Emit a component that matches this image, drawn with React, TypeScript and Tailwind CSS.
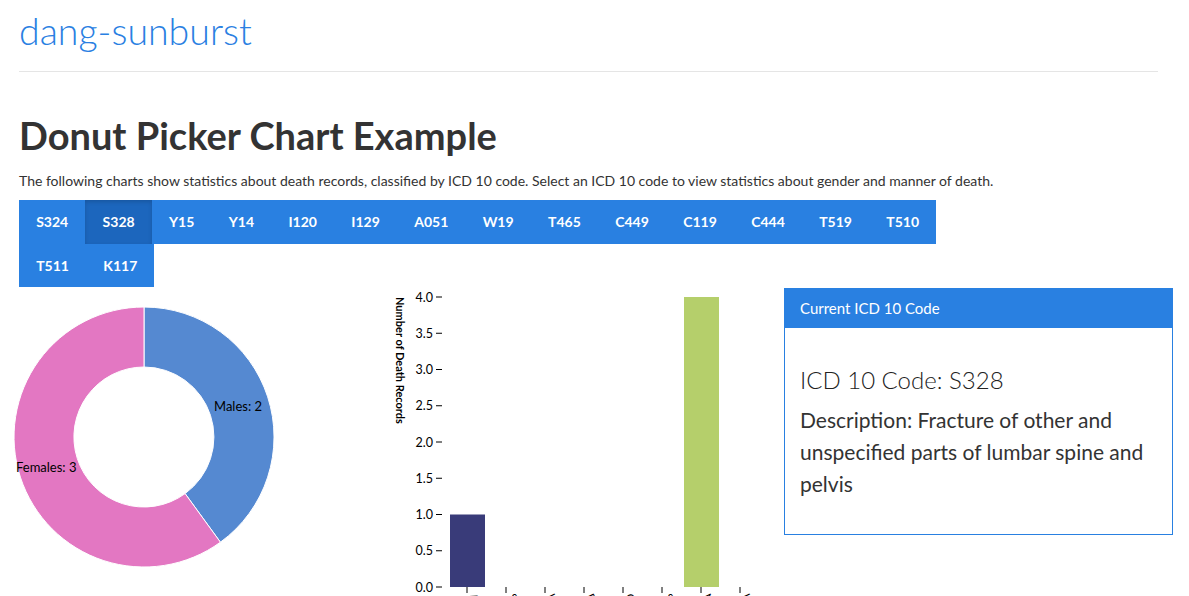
const codes = ["S324", "S328", "Y15", "Y14", "I120", "I129", "A051", "W19", "T465", "C449", "C119", "C444", "T519", "T510", "T511", "K117"];

const selected = "S328";

const yTicks = [0, 0.5, 1, 1.5, 2, 2.5, 3, 3.5, 4];
const xLabels = ["Accident", "Suicide", "Homicide", "Pending", "Could not be determined", "Self-inflicted", "Natural", "Unknown"];
const bars = [
  { i: 0, value: 1, color: "#393b79" },
  { i: 6, value: 4, color: "#b5cf6b" },
];

function Donut() {
  return (
    <svg width="360" height="310" className="overflow-visible block">
      <path
        d="M125,20 A130,130 0 0 1 201.4,255.2 L166.1,206.6 A70,70 0 0 0 125,80 Z"
        fill="#5589d1"
        stroke="#fff"
        strokeWidth="1"
      />
      <path
        d="M201.4,255.2 A130,130 0 1 1 125,20 L125,80 A70,70 0 1 0 166.1,206.6 Z"
        fill="#e377c2"
        stroke="#fff"
        strokeWidth="1"
      />
      <text x="195" y="124" fontSize="13" fill="#000">Males: 2</text>
      <text x="-3" y="185" fontSize="13" fill="#000">Females: 3</text>
    </svg>
  );
}

function BarChart() {
  const y = (v: number) => 300 - 72.5 * v;
  return (
    <svg width="404" height="330" className="overflow-visible block shrink-0">
      <text transform="translate(16,10) rotate(90)" fontSize="11" fontWeight="700" fill="#000">
        Number of Death Records
      </text>
      {yTicks.map((t) => (
        <g key={t}>
          <line x1="56" x2="62" y1={y(t)} y2={y(t)} stroke="#000" strokeWidth="1" />
          <text x="53" y={y(t) + 4.5} fontSize="12.5" textAnchor="end" fill="#000">
            {t.toFixed(1)}
          </text>
        </g>
      ))}
      {bars.map((b) => (
        <rect key={b.i} x={70 + 39 * b.i} y={y(b.value)} width="35" height={72.5 * b.value} fill={b.color} />
      ))}
      {xLabels.map((l, i) => (
        <g key={l}>
          <line x1={87 + 39 * i} x2={87 + 39 * i} y1="300" y2="306" stroke="#000" strokeWidth="1" />
          <text transform={`translate(${89 + 39 * i},309) rotate(65)`} fontSize="11" fill="#000">
            {l}
          </text>
        </g>
      ))}
    </svg>
  );
}

export default function App() {
  return (
    <div className="bg-white min-h-screen text-[#333] font-['Lato','Open_Sans',sans-serif]">
      <div className="px-[19px] w-[1177px]">
        <div className="pt-[9px] pb-[18px] border-b border-[#e5e5e5]">
          <h1 className="text-[37.5px] leading-[44px] font-light text-[#2a80e2]">dang-sunburst</h1>
        </div>
        <h2 className="mt-[41px] text-[38px] leading-[44px] font-bold text-[#333]">Donut Picker Chart Example</h2>
        <p className="mt-[14px] text-[14px] leading-[20px] text-[#333]">
          The following charts show statistics about death records, classified by ICD 10 code. Select an ICD 10 code to view statistics about gender and manner of death.
        </p>
        <div className="mt-[9px] w-[920px] flex flex-wrap">
          {codes.map((c) => (
            <button
              key={c}
              className={`h-[43.5px] px-[17.2px] text-[14px] font-bold text-white ${
                c === selected ? "bg-[#1c66bd] shadow-[inset_0_2px_4px_rgba(0,0,0,0.15)]" : "bg-[#2980e1]"
              }`}
            >
              {c}
            </button>
          ))}
        </div>
        <div className="flex items-start">
          <div className="w-[361px] shrink-0">
            <Donut />
          </div>
          <BarChart />
          <div className="mt-[1px] w-[389px] shrink-0 border border-[#2980e1] bg-white">
            <div className="bg-[#2980e1] h-[39px] px-[15px] flex items-center text-white text-[15px]">
              Current ICD 10 Code
            </div>
            <div className="px-[15px] pt-[36px] pb-[34px] text-[#333]">
              <div className="text-[24px] leading-[32px] font-light text-[#222]">ICD 10 Code: S328</div>
              <div className="mt-[8px] text-[21px] leading-[32px] text-[#333]">
                Description: Fracture of other and unspecified parts of lumbar spine and pelvis
              </div>
            </div>
          </div>
        </div>
      </div>
    </div>
  );
}
